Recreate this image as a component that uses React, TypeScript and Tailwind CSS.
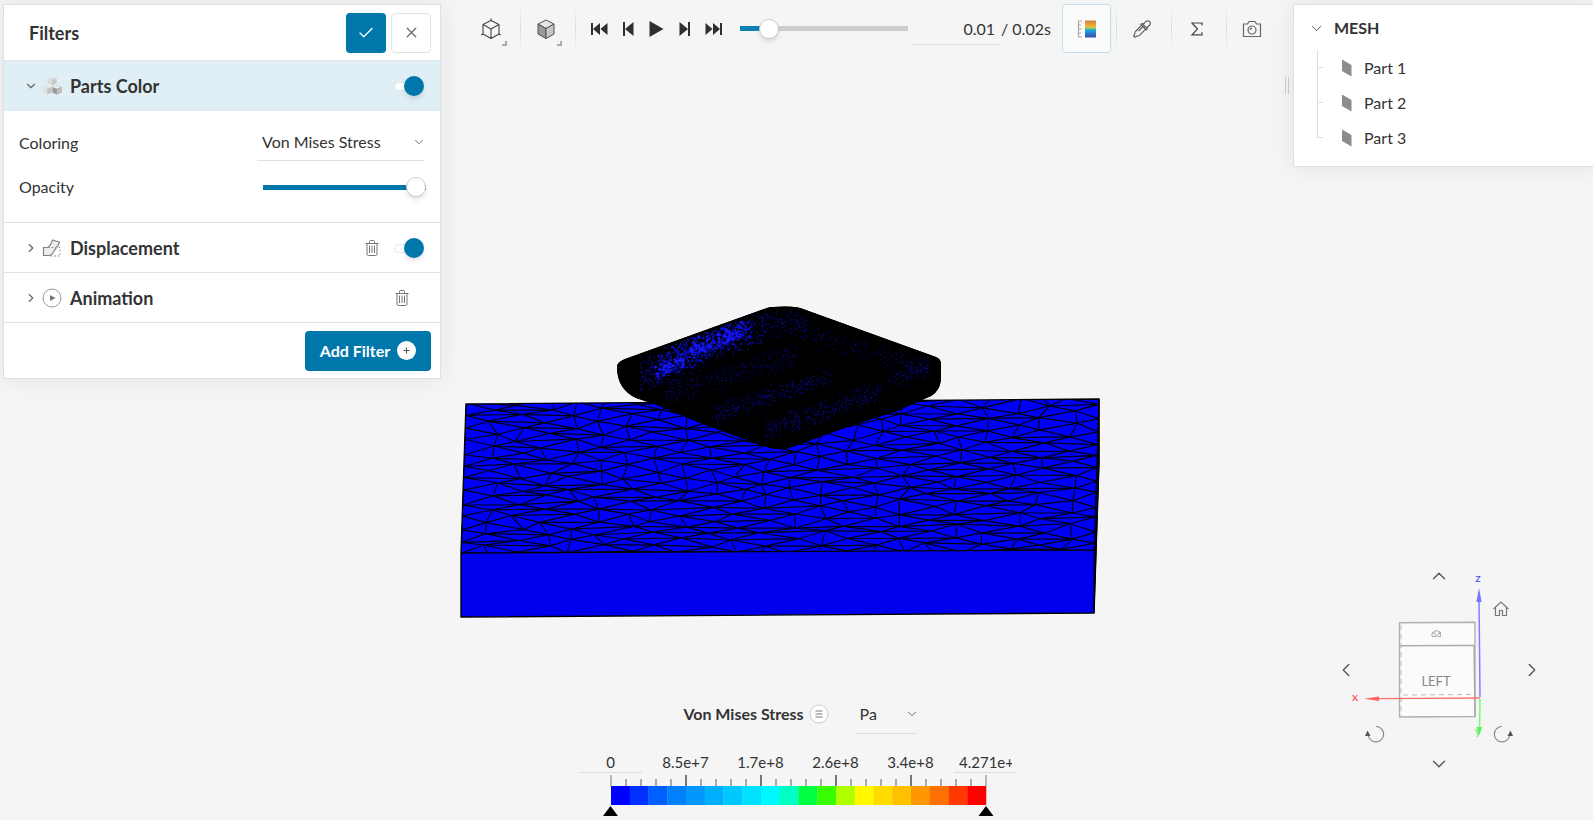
import React from "react";
import { Check, ChevronDown, ChevronLeft, ChevronRight, ChevronUp, X } from "lucide-react";

/* ---------- mesh geometry ---------- */

type Pt = [number, number];

function makeRandom(seed: number) {
    let s = seed;
    return () => {
        s = (s * 16807) % 2147483647;
        return s / 2147483647;
    };
}

// top face of the block, as a squashed triangle lattice
function buildBlockMesh() {
    const rand = makeRandom(77);
    const cols = 23;
    const rows = 12;
    const nodes: Pt[][] = [];
    for (let i = 0; i <= cols; i++) {
        const column: Pt[] = [];
        for (let j = -1; j <= rows + 1; j++) {
            const edge = i === 0 || i === cols;
            const u = i / cols + (edge ? 0 : (rand() - 0.5) * 0.022);
            const v = (j + (i % 2) * 0.5) / rows + (rand() - 0.5) * 0.024;
            const left = 466 - 5 * v;
            const right = 1099 - 4 * v;
            const top = 404 - 5 * u;
            const bottom = 553 - 3 * u;
            column.push([left + (right - left) * u, top + (bottom - top) * v]);
        }
        nodes.push(column);
    }
    let d = "";
    const line = (a?: Pt, b?: Pt) => {
        if (a && b) {
            d += `M${a[0].toFixed(1)} ${a[1].toFixed(1)}L${b[0].toFixed(1)} ${b[1].toFixed(1)}`;
        }
    };
    for (let i = 0; i <= cols; i++) {
        for (let j = 0; j < nodes[i].length; j++) {
            const odd = i % 2;
            const next = nodes[i + 1];
            if (next) {
                line(nodes[i][j], next[j]);
                line(nodes[i][j], next[odd ? j + 1 : j - 1]);
            }
            // each quad takes either its short or its long diagonal
            const prev = nodes[i - 1];
            const opposite = odd ? j + 1 : j;
            if (prev && next && rand() > 0.42) {
                line(prev[opposite], next[opposite]);
            } else {
                line(nodes[i][j], nodes[i][j + 1]);
            }
        }
    }
    return d;
}

const SPECKLE_BANDS = [
    { from: [640, 376], to: [765, 322], spread: 22, count: 700, size: 1.6, tone: "#0a0a9c" },
    { from: [655, 366], to: [752, 326], spread: 17, count: 420, size: 2.2, tone: "#0c0cd8" },
    { from: [690, 348], to: [742, 328], spread: 11, count: 90, size: 3.4, tone: "#1414f4" },
    { from: [655, 372], to: [684, 358], spread: 10, count: 50, size: 3.2, tone: "#1414f4" },
    { from: [762, 324], to: [806, 322], spread: 15, count: 200, size: 1.2, tone: "#0a0ab0" },
    { from: [665, 393], to: [797, 355], spread: 15, count: 520, size: 1.1, tone: "#0a0a98" },
    { from: [712, 414], to: [833, 375], spread: 12, count: 480, size: 1.2, tone: "#0a0aa8" },
    { from: [765, 431], to: [882, 390], spread: 13, count: 520, size: 1.2, tone: "#0a0aa8" },
    { from: [800, 330], to: [930, 370], spread: 13, count: 340, size: 1.1, tone: "#0a0a98" },
    { from: [888, 380], to: [930, 366], spread: 12, count: 130, size: 1.2, tone: "#0a0aa8" },
];

function buildSpeckles() {
    const rand = makeRandom(4242);
    return SPECKLE_BANDS.map((band) => {
        const [x1, y1] = band.from;
        const [x2, y2] = band.to;
        let d = "";
        for (let n = 0; n < band.count; n++) {
            const t = rand();
            const off = (rand() + rand() - 1) * band.spread;
            const x = x1 + (x2 - x1) * t;
            const y = y1 + (y2 - y1) * t + off;
            const s = band.size * (0.6 + rand() * 0.5);
            const w = s * 0.6;
            d += `M${x.toFixed(1)} ${y.toFixed(1)}l${w.toFixed(1)} ${s.toFixed(1)}h${(-w * 2).toFixed(1)}z`;
        }
        return { d, tone: band.tone };
    });
}

const blockMesh = buildBlockMesh();
const speckles = buildSpeckles();

const BODY =
    "M625 359L767 308Q771 306.500 785 306.500T803 309L936 357Q941 359 941 364L941 379Q940 391 931 396L897 411L847 427L789 448Q780 451 767 447L700 423L657 405L636 398Q617 389 617 367Q617 362 625 359Z";

function MeshScene() {
    return (
        <svg viewBox="458 300 644 322" className="w-[644px] max-w-full" role="img" aria-label="Mesh result">
            <defs>
                <clipPath id="top-face">
                    <path d="M466 404L1099 399L1095 550L461 553Z" />
                </clipPath>
                <clipPath id="body">
                    <path d={BODY} />
                </clipPath>
            </defs>
            <path d="M466 404L1099 399L1099 462L1094 613L461 617L461 553Z" fill="#0000ee" />
            <path d="M466 404L1099 399L1095 550L461 553Z" fill="#0000fa" />
            <g clipPath="url(#top-face)">
                <path d={blockMesh} stroke="#000014" strokeWidth="1.2" fill="none" />
            </g>
            <path d="M1099 399L1099 462L1094 613L1094 551Z" fill="#000078" stroke="#000" strokeWidth="1" />
            <path
                d="M466 404L1099 399L1099 462L1094 613L461 617L461 553ZM461 553L1095 550"
                fill="none"
                stroke="#000"
                strokeWidth="1.4"
                strokeLinejoin="round"
            />
            <path d={BODY} fill="#000" />
            <g clipPath="url(#body)">
                {speckles.map((s, i) => (
                    <path key={i} d={s.d} fill={s.tone} />
                ))}
                <path d={BODY} fill="none" stroke="#000" strokeWidth="5" />
            </g>
        </svg>
    );
}

/* ---------- icons ---------- */

function PartsIcon() {
    return (
        <svg width="20" height="20" viewBox="0 0 20 20">
            <path d="M10 1l4.500 1.500v5L10 9.500 5.500 7.500v-5z" fill="#dcdcdc" />
            <path d="M10 4l4.500-1.500v5L10 9.500z" fill="#c8c8c8" />
            <path d="M5.200 9.500L9.700 11v5.500l-4.500 2L.5 16.500V11z" fill="#e2e2e2" />
            <path d="M5.200 12.700L9.700 11v5.500l-4.500 2z" fill="#c4c4c4" />
            <path d="M14.800 9.500l4.700 1.500v5.500l-4.700 2-4.500-2V11z" fill="#9a9a9a" />
            <path d="M14.800 9.500l4.700 1.500-4.700 1.700L10.300 11z" fill="#ececec" />
            <path d="M14.800 12.700l4.700-1.700v5.500l-4.700 2z" fill="#bdbdbd" />
        </svg>
    );
}

function DisplacementIcon() {
    return (
        <svg width="20" height="20" viewBox="0 0 20 20" fill="none">
            <path d="M1.500 9.500H6Q9 7 10.500 2q3 1.200 7 2-1 4-4.500 7.500-2 4.500-5 6H1.500z" fill="#ededed" stroke="#808080" strokeWidth="1.1" />
            <path d="M6 9.500h12v8.500H8" stroke="#999" strokeDasharray="2 1.500" />
        </svg>
    );
}

function AnimationIcon() {
    return (
        <svg width="20" height="20" viewBox="0 0 20 20">
            <circle cx="10" cy="10" r="9" fill="none" stroke="#999" />
            <path d="M8 7l5.500 3L8 13z" fill="#777" />
        </svg>
    );
}

function TrashIcon() {
    return (
        <svg width="14" height="16" viewBox="0 0 14 16" fill="none" stroke="#777">
            <path d="M.5 3.500h13M4.500 3.500v-2q0-1 1-1h3q1 0 1 1v2" />
            <path d="M2 3.500V14q0 1.500 1.500 1.500h7Q12 15.500 12 14V3.500" />
            <path d="M4.500 5.500v7.500M7 5.500v7.500M9.500 5.500v7.500" />
        </svg>
    );
}

function WireCubeIcon() {
    return (
        <svg width="20" height="22" viewBox="0 0 20 22" fill="none" stroke="#444" strokeWidth="1.1" strokeLinejoin="round">
            <path d="M10 2.500l8 4v9.500l-8 4.500-8-4.500V6.500zM2 6.500l8 4.500 8-4.500M10 11v9.500" />
            <path d="M10 2.500V.5M2 16l-1.800 1M18 16l1.800 1" />
        </svg>
    );
}

function SolidCubeIcon() {
    return (
        <svg width="20" height="22" viewBox="0 0 20 22" stroke="#555" strokeLinejoin="round">
            <path d="M10 2l8 4-8 4.500L2 6z" fill="#e4e4e4" />
            <path d="M2 6l8 4.500v10L2 16z" fill="#999" />
            <path d="M18 6l-8 4.500v10l8-4.500z" fill="#c6c6c6" />
        </svg>
    );
}

function ColorScaleIcon() {
    return (
        <svg width="20" height="18" viewBox="0 0 20 18">
            <defs>
                <linearGradient id="scale-fill" x1="0" y1="0" x2="0" y2="1">
                    <stop offset="0" stopColor="#d08040" />
                    <stop offset="0.25" stopColor="#eda437" />
                    <stop offset="0.42" stopColor="#d3c544" />
                    <stop offset="0.52" stopColor="#35b8b4" />
                    <stop offset="0.65" stopColor="#1b94e0" />
                    <stop offset="1" stopColor="#464a9c" />
                </linearGradient>
            </defs>
            <path d="M1.500.5V17.500M1 1h4M1 5h3M1 9h4M1 13h3M1 17h4" stroke="#aaa" strokeWidth="1.2" />
            <path d="M8 .5h11v17H8z" fill="url(#scale-fill)" />
        </svg>
    );
}

function DropperIcon() {
    return (
        <svg width="18" height="18" viewBox="0 0 18 18" fill="none" stroke="#555" strokeWidth="1.1" strokeLinejoin="round">
            <path d="M7.800 4.500l1.300-1 5.200 5.200-1 1.300z" />
            <path d="M10 4.300l3-3Q15 .1 16.500 1.500t.2 3.500l-3.200 3" />
            <path d="M8.500 5.300l-6 6.200q-.8 1-.7 2.600L.6 16l1.300 1.300 2-1.200q1.600.1 2.600-.7l6-6M9.800 6.800L5.500 11.200" />
        </svg>
    );
}

function SigmaIcon() {
    return (
        <svg width="14" height="14" viewBox="0 0 14 14" fill="none" stroke="#444" strokeWidth="1.2">
            <path d="M12 3.500V1H2l5.500 6L2 12.800h10v-2.500" />
        </svg>
    );
}

function CameraIcon() {
    return (
        <svg width="20" height="18" viewBox="0 0 20 18" fill="none" stroke="#666" strokeWidth="1.2">
            <path d="M1.500 4H5.500L7 1.500h6L14.500 4h4v12.500h-17z" />
            <circle cx="10" cy="10" r="4" />
            <path d="M8.200 10q0-1.800 1.800-1.800" />
        </svg>
    );
}

function RotateIcon({ flip = false }: { flip?: boolean }) {
    return (
        <svg width="20" height="20" viewBox="0 0 20 20" className={flip ? "-scale-x-100" : ""}>
            <path d="M11 2.500A7.700 7.700 0 1 1 3.300 11" fill="none" stroke="#888" strokeWidth="1.2" />
            <path d="M2.500 6.500l3 5.500H0z" fill="#555" />
        </svg>
    );
}

function PlaybackIcon({ d, width }: { d: string; width: number }) {
    return (
        <svg width={width} height="16" viewBox={`0 0 ${width} 16`} fill="#2f2f2f">
            <path d={d} />
        </svg>
    );
}

/* ---------- shared controls ---------- */

function Toggle({ label }: { label: string }) {
    return (
        <input
            type="checkbox"
            role="switch"
            aria-label={label}
            defaultChecked
            className="relative h-5 w-[30px] appearance-none cursor-pointer before:absolute before:left-0 before:top-[6px] before:h-[9px] before:w-5 before:rounded-full before:border before:border-gray-200 before:bg-white after:absolute after:left-0 after:top-0 after:size-5 after:rounded-full after:bg-gray-400 after:shadow-md checked:after:left-[10px] checked:after:bg-[#0077ab]"
        />
    );
}

const THUMB =
    "h-5 appearance-none bg-no-repeat bg-center rounded-sm [&::-webkit-slider-thumb]:appearance-none [&::-webkit-slider-thumb]:size-5 [&::-webkit-slider-thumb]:rounded-full [&::-webkit-slider-thumb]:border [&::-webkit-slider-thumb]:border-[#ccc] [&::-webkit-slider-thumb]:bg-white [&::-webkit-slider-thumb]:shadow-md";

function ToolButton({ label, corner, children }: { label: string; corner?: boolean; children: React.ReactNode }) {
    return (
        <button type="button" aria-label={label} className="relative flex size-[49px] shrink-0 items-center justify-center">
            {children}
            {corner && <span className="absolute bottom-[7px] right-2 size-[5px] border-b-2 border-r-2 border-[#aaa]" />}
        </button>
    );
}

function Separator() {
    return <span className="ml-[5px] h-12 w-px shrink-0 bg-linear-to-b from-transparent via-[#dcdcdc] to-transparent" />;
}

/* ---------- panels ---------- */

function FilterRow({
    title,
    icon,
    open,
    children,
}: {
    title: string;
    icon: React.ReactNode;
    open?: boolean;
    children?: React.ReactNode;
}) {
    return (
        <div
            className={`flex items-center border-b pl-5 pr-4 ${
                open ? "h-[50px] border-[#dfeef6] bg-[#e0eef5]" : "h-[50px] border-[#e2e2e2]"
            }`}
        >
            <button type="button" aria-expanded={!!open} className="flex items-center">
                <span className="flex w-[18px] items-center">
                    {open ? (
                        <ChevronDown size={14} strokeWidth={2} className="text-[#666]" />
                    ) : (
                        <ChevronRight size={14} strokeWidth={2} className="text-[#666]" />
                    )}
                </span>
                {icon}
                <span className="ml-2 text-lg font-bold">{title}</span>
            </button>
            <div className="ml-auto flex items-center gap-[15px]">{children}</div>
        </div>
    );
}

function FiltersPanel() {
    return (
        <section className="w-[438px] shrink-0 self-start border border-[#e0e0e0] bg-white shadow-[0_0_24px_rgba(0,0,0,0.08)]">
            <header className="flex h-14 items-center border-b border-[#e2e2e2] pl-[25px] pr-[9px]">
                <h2 className="text-lg font-bold">Filters</h2>
                <button
                    type="button"
                    aria-label="Apply"
                    className="ml-auto flex size-10 items-center justify-center rounded bg-[#0077ab] text-white"
                >
                    <Check size={18} strokeWidth={1.75} />
                </button>
                <button
                    type="button"
                    aria-label="Close"
                    className="ml-[5px] flex size-10 items-center justify-center rounded border border-[#e2e2e2] text-[#666]"
                >
                    <X size={17} strokeWidth={1.75} />
                </button>
            </header>

            <FilterRow title="Parts Color" icon={<PartsIcon />} open>
                <Toggle label="Parts Color" />
            </FilterRow>
            <div className="border-b border-[#e2e2e2] pb-[17px] pl-[15px] pr-4 pt-[13px]">
                <div className="flex h-[37px] items-center justify-between">
                    <label htmlFor="coloring">Coloring</label>
                    <div className="grid w-[167px] items-center border-b border-[#e0e0e0]">
                        <select id="coloring" className="col-start-1 row-start-1 h-9 appearance-none bg-transparent pl-[5px]">
                            <option>Von Mises Stress</option>
                        </select>
                        <ChevronDown
                            size={14}
                            strokeWidth={1.5}
                            className="pointer-events-none col-start-1 row-start-1 -mr-0.5 justify-self-end text-[#555]"
                        />
                    </div>
                </div>
                <div className="mt-2 flex h-9 items-center justify-between">
                    <label htmlFor="opacity">Opacity</label>
                    <input
                        id="opacity"
                        type="range"
                        defaultValue={100}
                        className={`-mr-0.5 w-[163px] bg-[linear-gradient(#0077ab,#0077ab)] bg-size-[100%_5px] ${THUMB}`}
                    />
                </div>
            </div>

            <FilterRow title="Displacement" icon={<DisplacementIcon />}>
                <button type="button" aria-label="Delete Displacement">
                    <TrashIcon />
                </button>
                <Toggle label="Displacement" />
            </FilterRow>
            <FilterRow title="Animation" icon={<AnimationIcon />}>
                <button type="button" aria-label="Delete Animation" className="mr-[15px]">
                    <TrashIcon />
                </button>
            </FilterRow>

            <footer className="flex h-[55px] items-center justify-end pr-[9px]">
                <button
                    type="button"
                    className="flex h-10 w-[126px] items-center justify-center gap-[7px] rounded bg-[#0077ab] font-bold text-white"
                >
                    Add Filter
                    <svg width="19" height="19" viewBox="0 0 19 19">
                        <circle cx="9.500" cy="9.500" r="9.500" fill="#fff" />
                        <path d="M9.500 6.500v6M6.500 9.500h6" stroke="#555" strokeWidth="1.1" />
                    </svg>
                </button>
            </footer>
        </section>
    );
}

function Toolbar() {
    return (
        <div className="flex h-[49px] min-w-0 flex-1 items-center pl-[25px]">
            <ToolButton label="View orientation" corner>
                <WireCubeIcon />
            </ToolButton>
            <Separator />
            <ToolButton label="Render mode" corner>
                <SolidCubeIcon />
            </ToolButton>
            <Separator />

            <div className="ml-[15px] flex items-center gap-[15px]">
                <button type="button" aria-label="First frame">
                    <PlaybackIcon width={17} d="M0 2h2v12H0zM9 2v12L2 8zM16.500 2v12L9.500 8z" />
                </button>
                <button type="button" aria-label="Previous frame">
                    <PlaybackIcon width={11} d="M0 1h2v14H0zM10.500 1v14L2 8z" />
                </button>
                <button type="button" aria-label="Play">
                    <PlaybackIcon width={15} d="M.5 0v16L14.500 8z" />
                </button>
                <button type="button" aria-label="Next frame">
                    <PlaybackIcon width={11} d="M9 1h2v14H9zM.5 1v14L9 8z" />
                </button>
                <button type="button" aria-label="Last frame">
                    <PlaybackIcon width={17} d="M15 2h2v12h-2zM8 2v12l7-6zM.5 2v12l7-6z" />
                </button>
            </div>

            <input
                type="range"
                aria-label="Time"
                defaultValue={13}
                className={`ml-[18px] min-w-0 flex-1 bg-[linear-gradient(90deg,#0e80b3_18%,#cdcdcd_18%)] bg-size-[100%_5px] ${THUMB}`}
            />
            <input
                type="text"
                aria-label="Current time"
                defaultValue="0.01"
                className="ml-[5px] h-8 w-[88px] border-b border-[#dcdcdc] bg-transparent pr-[6px] text-right"
            />
            <span className="mr-[14px] w-[47px] whitespace-nowrap">/ 0.02s</span>

            <button
                type="button"
                aria-label="Color legend"
                aria-pressed="true"
                className="flex size-[49px] shrink-0 items-center justify-center rounded border border-[#bfe0ee] bg-[#fbfbfb]"
            >
                <ColorScaleIcon />
            </button>
            <Separator />
            <ToolButton label="Pick value">
                <DropperIcon />
            </ToolButton>
            <Separator />
            <ToolButton label="Statistics">
                <SigmaIcon />
            </ToolButton>
            <Separator />
            <ToolButton label="Screenshot">
                <CameraIcon />
            </ToolButton>
        </div>
    );
}

const PARTS = ["Part 1", "Part 2", "Part 3"];

function MeshPanel() {
    return (
        <section className="h-[163px] w-[300px] shrink-0 border border-r-0 border-[#e0e0e0] bg-white pl-[14px] pt-[11px] shadow-[0_0_24px_rgba(0,0,0,0.08)]">
            <button type="button" className="flex items-center gap-[9px] font-bold">
                <ChevronDown size={17} strokeWidth={1.25} className="text-[#444]" />
                MESH
            </button>
            <ul className="ml-[9px] mt-[10px]">
                {PARTS.map((part, i) => (
                    <li key={part} className="flex h-[35px] items-center">
                        <span className="flex h-full w-[6px] flex-col">
                            <span className="h-[18px] border-b border-l border-[#ddd]" />
                            {i < PARTS.length - 1 && <span className="flex-1 border-l border-[#ddd]" />}
                        </span>
                        <svg width="10" height="18" viewBox="0 0 10 18" className="ml-[19px]">
                            <path d="M0 .5l9.500 5.500v11.500L0 12z" fill="#8c8c8c" />
                        </svg>
                        <span className="ml-3">{part}</span>
                    </li>
                ))}
            </ul>
        </section>
    );
}

/* ---------- legend ---------- */

const LEGEND_COLORS = [
    "#0000ff", "#0030ff", "#0060ff", "#0080ff", "#0098ff", "#00b0ff", "#00c8ff", "#00e0ff", "#00f8ff", "#00ffc0",
    "#00ff40", "#38ff00", "#b0ff00", "#fff800", "#ffdc00", "#ffc000", "#ff9800", "#ff7000", "#ff3800", "#ff0000",
];

const LEGEND_LABELS = ["8.5e+7", "1.7e+8", "2.6e+8", "3.4e+8"];

function Legend() {
    return (
        <div className="flex flex-col items-center">
            <div className="flex h-10 items-center pl-1">
                <span className="font-bold">Von Mises Stress</span>
                <button type="button" aria-label="Legend settings" className="ml-[5px]">
                    <svg width="20" height="20" viewBox="0 0 20 20">
                        <circle cx="10" cy="10" r="9" fill="#fff" stroke="#ccc" />
                        <path d="M6.500 7h7M6.500 10h7M6.500 13h7" stroke="#777" strokeWidth="1.2" />
                    </svg>
                </button>
                <div className="ml-[26px] grid w-[62px] items-center border-b border-[#dedede]">
                    <select aria-label="Unit" className="col-start-1 row-start-1 h-[39px] appearance-none bg-transparent pl-[5px]">
                        <option>Pa</option>
                    </select>
                    <ChevronDown
                        size={14}
                        strokeWidth={1.5}
                        className="pointer-events-none col-start-1 row-start-1 -mr-0.5 justify-self-end text-[#555]"
                    />
                </div>
            </div>

            <div className="mt-[17px] flex h-[22px] items-center text-[15px]">
                <input
                    type="text"
                    aria-label="Minimum"
                    defaultValue="0"
                    className="h-full w-[63px] border-b border-[#dedede] bg-transparent text-center"
                />
                <div className="flex w-[312px] justify-around px-[6px]">
                    {LEGEND_LABELS.map((label) => (
                        <span key={label} className="w-[75px] text-center">
                            {label}
                        </span>
                    ))}
                </div>
                <input
                    type="text"
                    aria-label="Maximum"
                    defaultValue="4.271e+8"
                    className="h-full w-[63px] border-b border-[#dedede] bg-transparent px-[5px]"
                />
            </div>

            <svg width="391" height="46" viewBox="0 0 391 46" className="mt-px">
                {Array.from({ length: 26 }, (_, i) => {
                    const major = i % 5 === 0;
                    return (
                        <path
                            key={i}
                            d={`M${8 + i * 15} ${major ? 1 : 5}V12`}
                            stroke={major ? "#777" : "#aaa"}
                            strokeWidth={i === 0 || i === 25 ? 1 : 2}
                        />
                    );
                })}
                {LEGEND_COLORS.map((color, i) => (
                    <rect key={color} x={8 + i * 18.75} y="12" width="19" height="19" fill={color} />
                ))}
                <path d="M7.500 32L15 42H0zM383 32l7.500 10h-15z" fill="#000" />
            </svg>
        </div>
    );
}

/* ---------- navigation cube ---------- */

function NavigationCube() {
    return (
        <div className="grid size-[208px] text-[#555]">
            <svg viewBox="1335 566 208 208" className="col-start-1 row-start-1">
                <path d="M1399.500 622.700L1475 622.300V716.500L1399.500 717Z" fill="#fbfbfb" stroke="#b0b0b0" strokeWidth="1.400" />
                <path d="M1399.500 645.700L1474 645.400L1475 716.500" fill="none" stroke="#aaa" strokeWidth="1.400" />
                <path d="M1401 625V716M1403 695L1473 694.500" stroke="#bbb" strokeDasharray="5 4" />
                <path
                    d="M1432 636.500v-3.500l4-2.500 4 1.500M1432 633h3l1 3.500h-4M1436.500 636l4-4v4.500h-3M1438 633h3"
                    fill="none"
                    stroke="#999"
                    strokeWidth="0.800"
                />
                <text x="1436" y="686" textAnchor="middle" fontSize="13" fill="#888">
                    LEFT
                </text>
                <path d="M1480 698L1378 698.700" stroke="#ff7070" strokeWidth="1.300" />
                <path d="M1364 698.700l15-2.200v4.400z" fill="#ff6464" />
                <text x="1355" y="701" textAnchor="middle" fontSize="12" fill="#ff4040">
                    x
                </text>
                <path d="M1480 697L1479 600" stroke="#8080ff" strokeWidth="1.500" />
                <path d="M1479 588l2.600 14h-5.200z" fill="#7474ff" />
                <text x="1478" y="582" textAnchor="middle" fontSize="12" fill="#4444ff">
                    z
                </text>
                <path d="M1480 699L1479.500 728" stroke="#70ff70" strokeWidth="1.500" />
                <path d="M1476.500 727h5.500l-2.500 8z" fill="#50f850" />
                <text x="1478" y="735" textAnchor="middle" fontSize="12" fill="#50f050">
                    y
                </text>
            </svg>
            <div className="z-10 col-start-1 row-start-1 flex flex-col">
                <button type="button" aria-label="Rotate up" className="flex h-5 items-center justify-center">
                    <ChevronUp size={22} strokeWidth={1.5} />
                </button>
                <div className="mt-[13px] flex justify-end pr-[32px]">
                    <button type="button" aria-label="Home view">
                        <svg width="20" height="20" viewBox="0 0 20 20" fill="none" stroke="#777" strokeWidth="1.200">
                            <path d="M2.500 10L10 3l7.500 7M4.500 8.500v8h4V11.500h3v5h4v-8" />
                        </svg>
                    </button>
                </div>
                <div className="mt-10 flex justify-between">
                    <button type="button" aria-label="Rotate left">
                        <ChevronLeft size={22} strokeWidth={1.5} />
                    </button>
                    <button type="button" aria-label="Rotate right">
                        <ChevronRight size={22} strokeWidth={1.5} />
                    </button>
                </div>
                <div className="mt-[43px] flex justify-between px-[30px]">
                    <button type="button" aria-label="Roll left">
                        <RotateIcon />
                    </button>
                    <button type="button" aria-label="Roll right">
                        <RotateIcon flip />
                    </button>
                </div>
                <button type="button" aria-label="Rotate down" className="mt-[10px] flex h-5 items-center justify-center">
                    <ChevronDown size={22} strokeWidth={1.5} />
                </button>
            </div>
        </div>
    );
}

export default function App() {
    return (
        <main className="grid min-h-screen grid-cols-1 bg-[#f5f5f5] font-['Lato',sans-serif] text-base text-[#333]">
            <div className="col-start-1 row-start-1 flex items-center justify-center pr-[33px] pt-[102px]">
                <MeshScene />
            </div>
            <div className="z-10 col-start-1 row-start-1 flex items-start self-start pl-[3px] pt-1">
                <FiltersPanel />
                <Toolbar />
                <div className="ml-[9px] mr-1 mt-[73px] h-[17px] w-1 border-x border-[#c8d0dc]" />
                <MeshPanel />
            </div>
            <div className="col-start-1 row-start-1 self-end justify-self-center pl-[3px]">
                <Legend />
            </div>
            <div className="col-start-1 row-start-1 self-end justify-self-end pb-[46px] pr-[50px]">
                <NavigationCube />
            </div>
        </main>
    );
}
